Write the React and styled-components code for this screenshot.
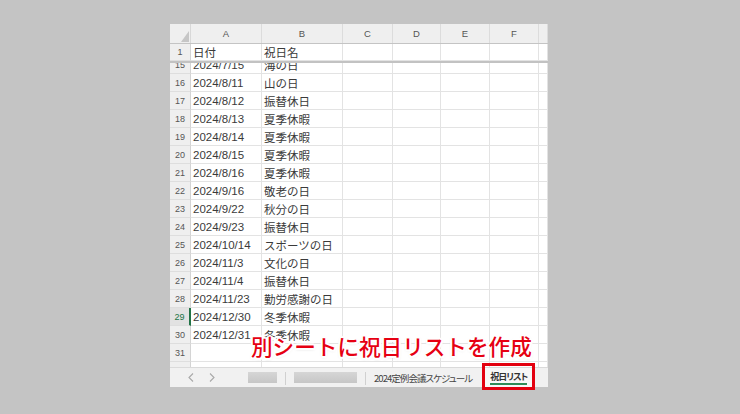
import React from "react";
import styled, { createGlobalStyle } from "styled-components";

const COLS = "21px 71px 81px 50px 48px 49px 49px 9px";
const LETTERS = ["A", "B", "C", "D", "E", "F", ""];

const rows = [
	[15, "2024/7/15", "海の日"],
	[16, "2024/8/11", "山の日"],
	[17, "2024/8/12", "振替休日"],
	[18, "2024/8/13", "夏季休暇"],
	[19, "2024/8/14", "夏季休暇"],
	[20, "2024/8/15", "夏季休暇"],
	[21, "2024/8/16", "夏季休暇"],
	[22, "2024/9/16", "敬老の日"],
	[23, "2024/9/22", "秋分の日"],
	[24, "2024/9/23", "振替休日"],
	[25, "2024/10/14", "スポーツの日"],
	[26, "2024/11/3", "文化の日"],
	[27, "2024/11/4", "振替休日"],
	[28, "2024/11/23", "勤労感謝の日"],
	[29, "2024/12/30", "冬季休暇"],
	[30, "2024/12/31", "冬季休暇"],
	[31, "", ""],
	[32, "", ""],
];

const Chevron = ({ left }) => (
	<svg width="6" height="9" viewBox="0 0 6 9">
		<path
			d={left ? "M5 0.5 L1 4.5 L5 8.5" : "M1 0.5 L5 4.5 L1 8.5"}
			fill="none"
			stroke="#a8a8a8"
			strokeWidth="1.1"
		/>
	</svg>
);

const Row = ({ num, date, name, active }) => (
	<GridRow>
		<RowNum $active={active}>{num}</RowNum>
		<Cell>{date}</Cell>
		<Cell>{name}</Cell>
		<Cell />
		<Cell />
		<Cell />
		<Cell />
		<Cell />
	</GridRow>
);

const App = () => {
	return (
		<>
			<GlobalStyle />
			<Page>
				<Window>
					<HeaderRow>
						<Corner>
							<svg width="8" height="11" viewBox="0 0 8 11">
								<polygon points="8,0 8,11 0,11" fill="#c6c6c6" />
							</svg>
						</Corner>
						{LETTERS.map((l, i) => (
							<ColHead key={i}>{l}</ColHead>
						))}
					</HeaderRow>

					<FrozenRow>
						<RowNum>1</RowNum>
						<Cell>日付</Cell>
						<Cell>祝日名</Cell>
						<Cell />
						<Cell />
						<Cell />
						<Cell />
						<Cell />
					</FrozenRow>

					<Body>
						<Scroller>
							{rows.map(([n, d, name]) => (
								<Row key={n} num={n} date={d} name={name} active={n === 29} />
							))}
						</Scroller>
					</Body>

					<TabBar>
						<Nav>
							<Chevron left />
							<Chevron />
						</Nav>
						<Tab>
							<Blur $w={29} />
						</Tab>
						<Sep />
						<Tab>
							<Blur $w={63} />
						</Tab>
						<Sep />
						<Tab>2024定例会議スケジュール</Tab>
						<ActiveTab>
							<span>祝日リスト</span>
						</ActiveTab>
					</TabBar>

					<Note>別シートに祝日リストを作成</Note>
				</Window>
			</Page>
		</>
	);
};

export default App;

//STYLES
const GlobalStyle = createGlobalStyle`
	html, body {
		margin: 0;
		padding: 0;
		background: #c4c4c4;
	}
	* {
		box-sizing: border-box;
	}
`;

const Page = styled.div`
	width: 740px;
	height: 414px;
	padding: 24px 0 0 170px;
	font-family: "Liberation Sans", "Noto Sans CJK JP", sans-serif;
`;

const Window = styled.div`
	position: relative;
	width: 378px;
	height: 363px;
	background: #ffffff;
	display: flex;
	flex-direction: column;
`;

const HeaderRow = styled.div`
	display: grid;
	grid-template-columns: ${COLS};
	height: 20px;
	background: #efefef;
	border-bottom: 1px solid #c4c4c4;
`;

const Corner = styled.div`
	display: flex;
	align-items: flex-end;
	justify-content: flex-end;
	padding: 0 1px 1px 0;
	border-right: 1px solid #d8d8d8;
`;

const ColHead = styled.div`
	display: flex;
	align-items: center;
	justify-content: center;
	font-size: 9.5px;
	color: #555;
	border-right: 1px solid #dcdcdc;
`;

const GridRow = styled.div`
	display: grid;
	grid-template-columns: ${COLS};
	height: 18px;
`;

const FrozenRow = styled(GridRow)`
	height: 19px;
	border-bottom: 2px solid #c2c2c2;
`;

const RowNum = styled.div`
	display: flex;
	align-items: center;
	justify-content: center;
	font-size: 9px;
	color: ${(p) => (p.$active ? "#217346" : "#555")};
	background: ${(p) => (p.$active ? "#e2e2e2" : "#efefef")};
	border-right: ${(p) => (p.$active ? "2px solid #217346" : "1px solid #d4d4d4")};
	border-bottom: 1px solid #dedede;
`;

const Cell = styled.div`
	display: flex;
	align-items: center;
	padding-left: 2px;
	font-size: 11.5px;
	color: #3a3a3a;
	white-space: nowrap;
	border-right: 1px solid #e3e3e3;
	border-bottom: 1px solid #e3e3e3;
`;

const Body = styled.div`
	flex: 1;
	overflow: hidden;
`;

const Scroller = styled.div`
	margin-top: -7px;
`;

const TabBar = styled.div`
	height: 20px;
	display: flex;
	align-items: stretch;
	background: #f1f1f1;
	border-top: 1px solid #dadada;
	font-family: "Noto Sans CJK JP", sans-serif;
	font-feature-settings: "palt";
`;

const Nav = styled.div`
	display: flex;
	align-items: center;
	gap: 15px;
	padding: 0 25px 0 18px;
`;

const Tab = styled.div`
	display: flex;
	align-items: center;
	padding: 0 8px;
	font-size: 9.5px;
	color: #444;
	white-space: nowrap;
	letter-spacing: -0.95px;
`;

const Blur = styled.div`
	width: ${(p) => p.$w}px;
	height: 11px;
	background: linear-gradient(#d6d6d6, #c6c6c6);
	filter: blur(0.6px);
`;

const Sep = styled.div`
	width: 1px;
	margin: 4px 0 2px;
	background: #d0d0d0;
`;

const ActiveTab = styled(Tab)`
	position: relative;
	margin-left: 2px;
	padding: 0 8px;
	font-size: 9px;
	font-weight: 700;
	letter-spacing: -0.9px;
	color: #333;
	background: #f7f7f7;

	span {
		border-bottom: 2px solid #2e8b57;
		line-height: 12px;
		padding-top: 1px;
	}

	&::after {
		content: "";
		position: absolute;
		top: -5px;
		bottom: -3px;
		left: 0;
		right: 0;
		border: 3px solid #e3000f;
	}
`;

const Note = styled.div`
	position: absolute;
	left: 81px;
	top: 310px;
	font-family: "Noto Sans CJK JP", sans-serif;
	font-size: 21.6px;
	line-height: 24px;
	font-weight: 500;
	color: #e60012;
	white-space: nowrap;
	text-shadow:
		2px 0 0 #fff, -2px 0 0 #fff, 0 2px 0 #fff, 0 -2px 0 #fff,
		1.5px 1.5px 0 #fff, -1.5px 1.5px 0 #fff, 1.5px -1.5px 0 #fff, -1.5px -1.5px 0 #fff,
		0 1px 3px rgba(0, 0, 0, 0.25);
`;
